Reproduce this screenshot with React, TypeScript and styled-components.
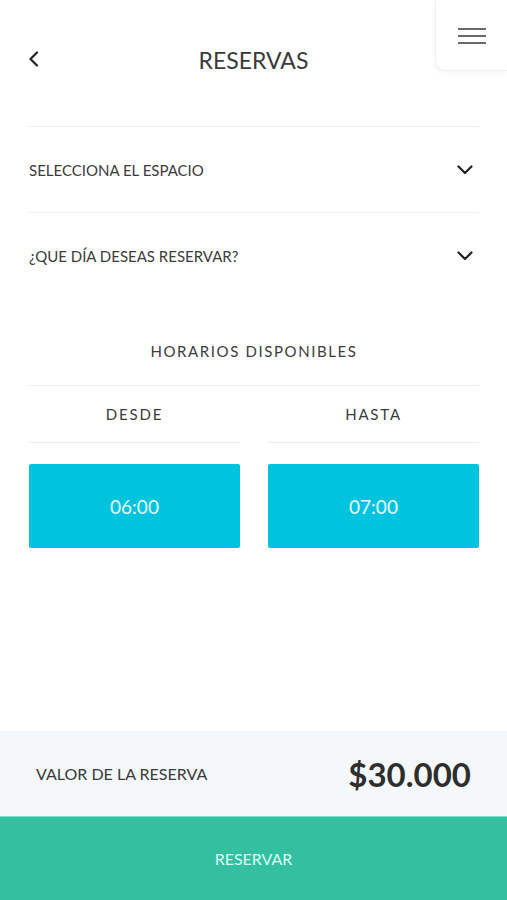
import React from 'react';
import styled, { createGlobalStyle } from 'styled-components';

const GlobalStyle = createGlobalStyle`
    html, body {
        margin: 0;
        padding: 0;
        background: #ffffff;
    }
    body {
        font-family: 'Lato', 'Noto Sans', sans-serif;
        color: #3a3a3a;
    }
`;

const Screen = styled.div`
    width: 507px;
    height: 900px;
    display: flex;
    flex-direction: column;
    position: relative;
    overflow: hidden;
    background: #ffffff;
`;

const Header = styled.header`
    height: 126px;
    display: flex;
    align-items: flex-start;
    justify-content: center;
    position: relative;
    padding-top: 44px;
    box-sizing: border-box;
`;

const BackButton = styled.button`
    position: absolute;
    left: 22px;
    top: 47px;
    width: 24px;
    height: 24px;
    padding: 0;
    border: 0;
    background: none;
    display: flex;
    align-items: center;
    justify-content: center;
`;

const Title = styled.h1`
    margin: 0;
    font-size: 23px;
    font-weight: 400;
    color: #3a3a3a;
    line-height: 32px;
`;

const MenuButton = styled.button`
    position: absolute;
    right: 0;
    top: 0;
    width: 72px;
    height: 71px;
    border: 1px solid #f0f0f0;
    border-top: 0;
    border-right: 0;
    border-bottom-left-radius: 10px;
    background: #ffffff;
    box-shadow: 0 2px 6px rgba(0, 0, 0, 0.04);
    display: flex;
    flex-direction: column;
    align-items: center;
    justify-content: flex-start;
    gap: 5px;
    padding: 28px 0 0 0;
    box-sizing: border-box;

    & span {
        display: block;
        width: 28px;
        height: 2px;
        background: #6a6a6a;
    }
`;

const Content = styled.main`
    flex: 1;
    padding: 0 28px 0 29px;
    display: flex;
    flex-direction: column;
`;

const SelectRow = styled.div`
    height: 85px;
    border-top: 1px solid #ededed;
    display: flex;
    align-items: center;
    justify-content: space-between;
    font-size: 15px;
    color: #3c3c3c;
    padding-right: 6px;

    &:last-of-type {
        border-bottom: 1px solid #ededed;
    }
`;

const SectionTitle = styled.div`
    height: 88px;
    display: flex;
    align-items: center;
    justify-content: center;
    font-size: 15px;
    letter-spacing: 1.6px;
    color: #3c3c3c;
    border-bottom: 1px solid #ededed;
    padding-top: 18px;
    box-sizing: border-box;
`;

const Columns = styled.div`
    display: grid;
    grid-template-columns: 1fr 1fr;
    column-gap: 28px;
`;

const Column = styled.div`
    display: flex;
    flex-direction: column;
`;

const ColumnHead = styled.div`
    height: 56px;
    display: flex;
    align-items: center;
    justify-content: center;
    font-size: 15px;
    letter-spacing: 1.8px;
    color: #3c3c3c;
    border-bottom: 1px solid #ededed;
`;

const TimeBox = styled.div`
    margin-top: 21px;
    height: 84px;
    border-radius: 2px;
    background: #00c4de;
    color: #e6fbff;
    font-size: 19px;
    display: flex;
    align-items: center;
    justify-content: center;
`;

const Summary = styled.div`
    height: 85px;
    background: #f5f8fb;
    display: flex;
    align-items: center;
    justify-content: space-between;
    padding: 0 36px;
`;

const SummaryLabel = styled.span`
    font-size: 16px;
    color: #3a3a3a;
`;

const SummaryValue = styled.span`
    font-size: 33px;
    font-weight: 700;
    color: #2e2e2e;
`;

const ReserveButton = styled.button`
    height: 84px;
    border: 0;
    border-top: 1px solid #7fdcc6;
    background: #34bfa1;
    color: #d9fff5;
    font-family: inherit;
    font-size: 16px;
    width: 100%;
`;

const ChevronLeft = () => (
    <svg width="12" height="16" viewBox="0 0 12 16" fill="none">
        <path d="M9 1.5 L2.5 8 L9 14.5" stroke="#222" strokeWidth="2.2" strokeLinecap="round" strokeLinejoin="round" />
    </svg>
);

const ChevronDown = () => (
    <svg width="16" height="10" viewBox="0 0 16 10" fill="none">
        <path d="M1.5 1.5 L8 8 L14.5 1.5" stroke="#222" strokeWidth="2.2" strokeLinecap="round" strokeLinejoin="round" />
    </svg>
);

export default function App() {
    return (
        <Screen>
            <GlobalStyle />
            <Header>
                <BackButton aria-label="Volver">
                    <ChevronLeft />
                </BackButton>
                <Title>RESERVAS</Title>
                <MenuButton aria-label="Menú">
                    <span />
                    <span />
                    <span />
                </MenuButton>
            </Header>
            <Content>
                <SelectRow>
                    SELECCIONA EL ESPACIO
                    <ChevronDown />
                </SelectRow>
                <SelectRow>
                    ¿QUE DÍA DESEAS RESERVAR?
                    <ChevronDown />
                </SelectRow>
                <SectionTitle>HORARIOS DISPONIBLES</SectionTitle>
                <Columns>
                    <Column>
                        <ColumnHead>DESDE</ColumnHead>
                        <TimeBox>06:00</TimeBox>
                    </Column>
                    <Column>
                        <ColumnHead>HASTA</ColumnHead>
                        <TimeBox>07:00</TimeBox>
                    </Column>
                </Columns>
            </Content>
            <Summary>
                <SummaryLabel>VALOR DE LA RESERVA</SummaryLabel>
                <SummaryValue>$30.000</SummaryValue>
            </Summary>
            <ReserveButton>RESERVAR</ReserveButton>
        </Screen>
    );
}
